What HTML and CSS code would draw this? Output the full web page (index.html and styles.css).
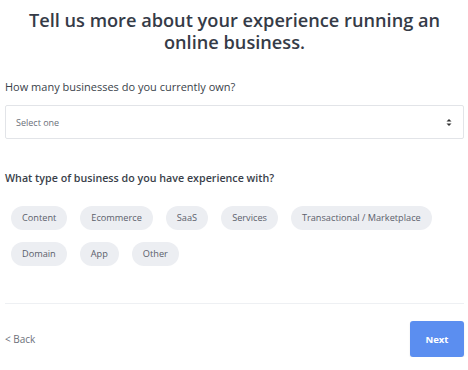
FILE: index.html
```html
<!DOCTYPE html>
<html lang="en">
<head>
    <meta charset="UTF-8">
    <meta name="viewport" content="width=device-width, initial-scale=1.0">
    <title>Onboarding</title>
    <link rel="stylesheet" href="styles.css">
</head>
<body>
    <div class="survey">
        <h1 class="title">Tell us more about your experience running an online business.</h1>

        <div class="field">
            <label class="label">How many businesses do you currently own?</label>
            <div class="select">
                <span>Select one</span>
                <svg class="arrows" width="6" height="9" viewBox="0 0 6 9">
                    <path d="M3 1 L5.5 3.5 H0.5 Z" fill="#333"/>
                    <path d="M3 8 L5.5 5.5 H0.5 Z" fill="#333"/>
                </svg>
            </div>
        </div>

        <div class="field types">
            <label class="label strong">What type of business do you have experience with?</label>
            <div class="pills">
                <span class="pill">Content</span>
                <span class="pill">Ecommerce</span>
                <span class="pill">SaaS</span>
                <span class="pill">Services</span>
                <span class="pill">Transactional / Marketplace</span>
                <span class="pill">Domain</span>
                <span class="pill">App</span>
                <span class="pill">Other</span>
            </div>
        </div>

        <div class="footer">
            <a class="back">&lt; Back</a>
            <button class="next">Next</button>
        </div>
    </div>
</body>
</html>
```

FILE: styles.css
```css
body {
    margin: 0;
    padding: 0;
    background: #fff;
    font-family: 'Open Sans', sans-serif;
    color: #3a3f4a;
}

.survey {
    width: 459px;
    padding: 0 4px 0 5px;
}

.title {
    margin: 9px 0 0 0;
    padding: 0 20px;
    font-size: 18.2px;
    font-weight: 600;
    line-height: 22px;
    text-align: center;
    color: #353b47;
}

.field {
    margin-top: 27px;
}

.label {
    display: block;
    font-size: 11px;
    line-height: 14px;
    color: #3a3f4a;
}

.label.strong {
    font-weight: 600;
    font-size: 10.7px;
}

.select {
    margin-top: 11px;
    height: 32px;
    border: 1px solid #e2e4e8;
    border-radius: 2px;
    display: flex;
    align-items: center;
    justify-content: space-between;
    padding: 0 11px 0 10px;
    font-size: 9px;
    color: #6b707a;
}

.types {
    margin-top: 32px;
}

.pills {
    margin-top: 21px;
    padding-left: 6px;
    display: flex;
    flex-wrap: wrap;
    gap: 12px 13px;
}

.pill {
    height: 24px;
    line-height: 24px;
    padding: 0 11px;
    border-radius: 12px;
    background: #eceef2;
    font-size: 9.2px;
    color: #5b606b;
}

.footer {
    margin-top: 37px;
    border-top: 1px solid #eef0f3;
    padding-top: 17px;
    display: flex;
    justify-content: space-between;
    align-items: center;
}

.back {
    font-size: 10px;
    color: #6b707a;
    cursor: pointer;
}

.next {
    width: 54px;
    height: 36px;
    border: none;
    border-radius: 3px;
    background: #5b8ef0;
    color: #fff;
    font-family: 'Open Sans', sans-serif;
    font-size: 9.5px;
    font-weight: 700;
    box-shadow: 0 1px 2px rgba(0,0,0,0.1);
}
```
